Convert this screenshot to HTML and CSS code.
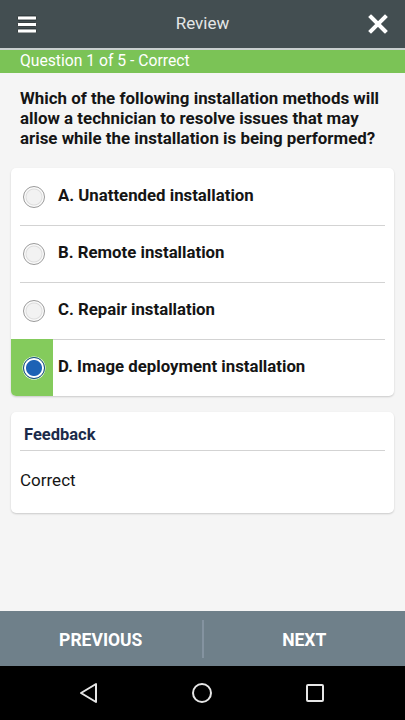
FILE: index.html
```html
<!DOCTYPE html>
<html>
<head>
<meta charset="utf-8">
<link rel="stylesheet" href="styles.css">
</head>
<body>
<div class="screen">
  <header class="topbar">
    <svg class="icon-menu" width="20" height="18" viewBox="0 0 20 18">
      <rect x="0.5" y="1" width="19" height="4" rx="1" fill="#fff" stroke="#1d2426" stroke-width="0.8"/>
      <rect x="0.5" y="7.5" width="19" height="4" rx="1" fill="#fff" stroke="#1d2426" stroke-width="0.8"/>
      <rect x="0.5" y="14" width="19" height="4" rx="1" fill="#fff" stroke="#1d2426" stroke-width="0.8"/>
    </svg>
    <div class="title">Review</div>
    <svg class="icon-close" width="20" height="20" viewBox="0 0 20 20">
      <path d="M3 3 L17 17 M17 3 L3 17" stroke="#fff" stroke-width="4" stroke-linecap="square"/>
    </svg>
  </header>
  <div class="status">Question 1 of 5 - Correct</div>
  <main class="content">
    <p class="question">Which of the following installation methods will allow a technician to resolve issues that may arise while the installation is being performed?</p>
    <div class="card options">
      <div class="option">
        <div class="radio-cell"><span class="radio"></span></div>
        <span class="label">A. Unattended installation</span>
      </div>
      <div class="option">
        <div class="radio-cell"><span class="radio"></span></div>
        <span class="label">B. Remote installation</span>
      </div>
      <div class="option">
        <div class="radio-cell"><span class="radio"></span></div>
        <span class="label">C. Repair installation</span>
      </div>
      <div class="option correct">
        <div class="radio-cell"><span class="radio checked"></span></div>
        <span class="label">D. Image deployment installation</span>
      </div>
    </div>
    <div class="card feedback">
      <div class="feedback-head">Feedback</div>
      <div class="feedback-body">Correct</div>
    </div>
  </main>
  <div class="pager">
    <div class="pager-btn">PREVIOUS</div>
    <div class="pager-sep"></div>
    <div class="pager-btn">NEXT</div>
  </div>
  <nav class="navbar">
    <svg width="20" height="22" viewBox="0 0 20 22"><path d="M17 2 L17 20 L2 11 Z" fill="none" stroke="#e6e6e6" stroke-width="2" stroke-linejoin="round"/></svg>
    <svg width="22" height="22" viewBox="0 0 22 22"><circle cx="11" cy="11" r="9" fill="none" stroke="#e6e6e6" stroke-width="2"/></svg>
    <svg width="20" height="20" viewBox="0 0 20 20"><rect x="2" y="2" width="16" height="16" rx="1" fill="none" stroke="#e6e6e6" stroke-width="2"/></svg>
  </nav>
</div>
</body>
</html>
```

FILE: styles.css
```css
* { box-sizing: border-box; }
html, body { margin: 0; padding: 0; }
body {
  font-family: Roboto, "Noto Sans", "Liberation Sans", sans-serif;
  background: #f5f5f5;
}
.screen {
  width: 405px;
  height: 720px;
  display: flex;
  flex-direction: column;
  background: #f5f5f5;
}
.topbar {
  background: #434e51;
  display: flex;
  align-items: center;
  justify-content: space-between;
  padding: 0 17px 0 17px;
  border-bottom: 2px solid #c9cfcf;
  height: 50px;
}
.title {
  color: #e4e6e6;
  font-size: 17px;
  line-height: 20px;
  margin-top: -2px;
}
.status {
  height: 23px;
  background: #7bc356;
  color: #fff;
  font-size: 15.7px;
  line-height: 22px;
  padding-left: 20px;
}
.content {
  flex: 1;
  display: flex;
  flex-direction: column;
}
.question {
  margin: 15px 20px 0 20px;
  font-size: 16.9px;
  line-height: 20px;
  font-weight: 700;
  color: #151515;
  height: 80px;
}
.card {
  background: #fff;
  margin: 0 11px;
  border-radius: 5px;
  box-shadow: 0 1px 2px rgba(0,0,0,0.18);
}
.options {
  overflow: hidden;
}
.option {
  height: 57px;
  display: flex;
  align-items: center;
  position: relative;
}
.option + .option::before {
  content: "";
  position: absolute;
  top: 0;
  left: 9px;
  right: 9px;
  height: 1px;
  background: #d3d3d3;
}
.radio-cell {
  width: 42px;
  height: 100%;
  display: flex;
  align-items: center;
  justify-content: flex-end;
  padding-right: 8px;
}
.option.correct .radio-cell {
  background: #84cb5c;
  position: relative;
  z-index: 1;
}
.radio {
  width: 22px;
  height: 22px;
  border-radius: 50%;
  border: 1.5px solid #9a9a9a;
  background: radial-gradient(circle, #f2f2f2 0, #f2f2f2 7px, #dcdcdc 8px, #fbfbfb 9px);
}
.radio.checked {
  border: 1px solid #134a8a;
  background: radial-gradient(circle, #1d62b5 0, #1d62b5 7.5px, #ffffff 8.5px);
  box-shadow: 0 0 0 0.5px #fff;
}
.label {
  margin-left: 5px;
  margin-bottom: 3px;
  font-size: 16.8px;
  font-weight: 700;
  color: #151515;
}
.feedback {
  margin-top: 16px;
  padding: 0 9px;
  height: 101px;
}
.feedback-head {
  padding: 13px 0 5px 4px;
  font-size: 16.5px;
  line-height: 20px;
  font-weight: 700;
  color: #1c2b4a;
  border-bottom: 1px solid #d3d3d3;
}
.feedback-body {
  padding-top: 19px;
  font-size: 17px;
  line-height: 20px;
  color: #151515;
}
.pager {
  height: 55px;
  background: #6f808a;
  display: flex;
  align-items: center;
}
.pager-btn {
  flex: 1;
  text-align: center;
  color: #fff;
  font-weight: 700;
  font-size: 17.5px;
  line-height: 20px;
  padding-top: 3px;
}
.pager-sep {
  width: 2px;
  height: 38px;
  background: #8493a0;
}
.navbar {
  height: 54px;
  background: #000;
  display: flex;
  align-items: center;
  justify-content: space-between;
  padding: 0 80px 0 79px;
}
```
